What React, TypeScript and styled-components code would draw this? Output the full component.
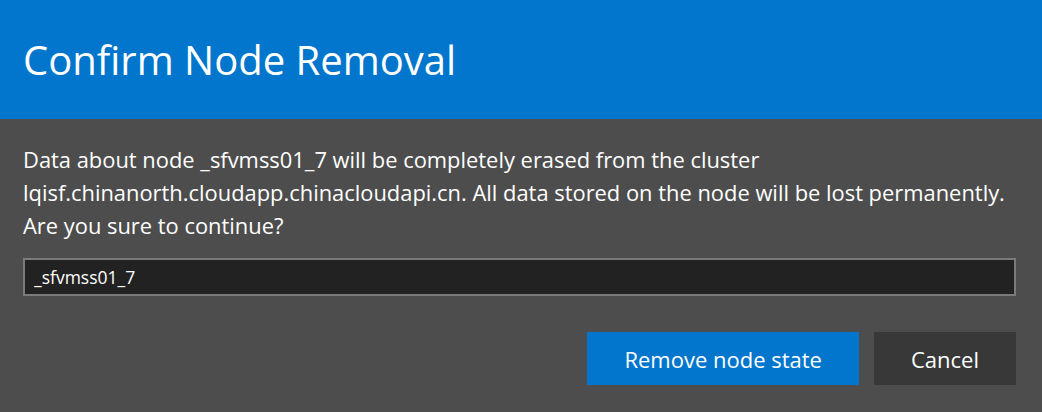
import styled, { createGlobalStyle } from 'styled-components';

const GlobalStyle = createGlobalStyle`
  html, body {
    margin: 0;
    padding: 0;
    background-color: #4d4d4d;
  }
  body {
    font-family: 'Open Sans', 'Noto Sans', sans-serif;
    color: #fff;
  }
`;

const Dialog = styled.div`
  width: 1042px;
  height: 412px;
  background-color: #4d4d4d;
  display: flex;
  flex-direction: column;
`;

const Header = styled.header`
  background-color: #0176cc;
  height: 119px;
  display: flex;
  align-items: center;
  padding: 0 23px;
  box-sizing: border-box;
`;

const Title = styled.h1`
  margin: 0;
  font-size: 40px;
  font-weight: 400;
  color: #fff;
`;

const Body = styled.div`
  padding: 24px 26px 0 23px;
  display: flex;
  flex-direction: column;
`;

const Message = styled.p`
  margin: 0;
  font-size: 21.9px;
  line-height: 33px;
  color: #fff;
  white-space: nowrap;
`;

const NameInput = styled.input`
  margin-top: 16px;
  height: 38px;
  box-sizing: border-box;
  background-color: #222;
  border: 2px solid #7a7a7a;
  color: #fff;
  font-family: inherit;
  font-size: 17.5px;
  padding: 0 9px;
  outline: none;
  caret-color: #fff;
`;

const Actions = styled.div`
  display: flex;
  justify-content: flex-end;
  gap: 15px;
  margin-top: 36px;
`;

const Button = styled.button<{ $primary?: boolean }>`
  height: 53px;
  border: none;
  font-family: inherit;
  font-size: 22px;
  color: #fff;
  cursor: pointer;
  padding: 0 37px;
  background-color: ${({ $primary }) => ($primary ? '#0176cc' : '#383838')};
`;

export default function App() {
  return (
    <>
      <GlobalStyle />
      <Dialog>
        <Header>
          <Title>Confirm Node Removal</Title>
        </Header>
        <Body>
          <Message>
            Data about node _sfvmss01_7 will be completely erased from the cluster
            <br />
            lqisf.chinanorth.cloudapp.chinacloudapi.cn. All data stored on the node will be lost permanently.
            <br />
            Are you sure to continue?
          </Message>
          <NameInput defaultValue="_sfvmss01_7" autoFocus />
          <Actions>
            <Button $primary>Remove node state</Button>
            <Button>Cancel</Button>
          </Actions>
        </Body>
      </Dialog>
    </>
  );
}
